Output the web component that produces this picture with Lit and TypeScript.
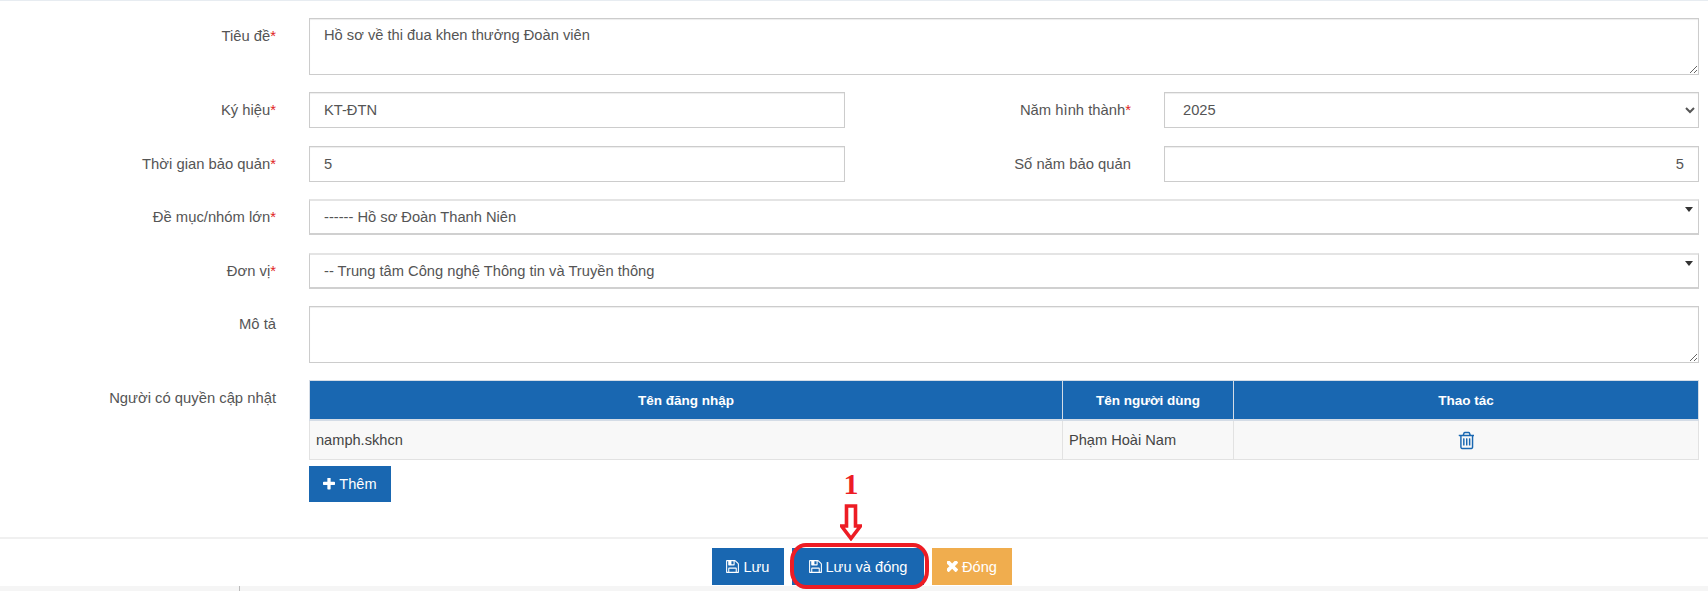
import { LitElement, html, css, svg } from "lit";
import { customElement } from "lit/decorators.js";

const floppy = svg`<path d="M384 1536h768v-384h-768v384zm896 0h128v-896q0-14-10-38.5t-20-34.5l-281-281q-10-10-34-20t-39-10v416q0 40-28 68t-68 28h-576q-40 0-68-28t-28-68v-416h-128v1280h128v-416q0-40 28-68t68-28h832q40 0 68 28t28 68v416zm-384-928v-320q0-13-9.5-22.5t-22.5-9.5h-192q-13 0-22.5 9.5t-9.5 22.5v320q0 13 9.5 22.5t22.5 9.5h192q13 0 22.5-9.5t9.5-22.5zm640 32v928q0 40-28 68t-68 28h-1344q-40 0-68-28t-28-68v-1344q0-40 28-68t68-28h928q40 0 88 20t76 48l280 280q28 28 48 76t20 88z"/>`;
const plus = svg`<path d="M1600 736v192q0 40-28 68t-68 28h-416v416q0 40-28 68t-68 28h-192q-40 0-68-28t-28-68v-416h-416q-40 0-68-28t-28-68v-192q0-40 28-68t68-28h416v-416q0-40 28-68t68-28h192q40 0 68 28t28 68v416h416q40 0 68 28t28 68z"/>`;
const times = svg`<path d="M1298 1322q0 40-28 68l-136 136q-28 28-68 28t-68-28l-294-294-294 294q-28 28-68 28t-68-28l-136-136q-28-28-28-68t28-68l294-294-294-294q-28-28-28-68t28-68l136-136q28-28 68-28t68 28l294 294 294-294q28-28 68-28t68 28l136 136q28 28 28 68t-28 68l-294 294 294 294q28 28 28 68z"/>`;
const trash = svg`<path d="M704 736v576q0 14-9 23t-23 9h-64q-14 0-23-9t-9-23v-576q0-14 9-23t23-9h64q14 0 23 9t9 23zm256 0v576q0 14-9 23t-23 9h-64q-14 0-23-9t-9-23v-576q0-14 9-23t23-9h64q14 0 23 9t9 23zm256 0v576q0 14-9 23t-23 9h-64q-14 0-23-9t-9-23v-576q0-14 9-23t23-9h64q14 0 23 9t9 23zm128 724v-948h-896v948q0 22 7 40.5t14.5 27 10.5 8.5h832q3 0 10.5-8.5t14.5-27 7-40.5zm-672-1076h448l-48-117q-7-9-17-11h-317q-10 2-17 11zm928 32v64q0 14-9 23t-23 9h-96v948q0 83-47 143.5t-113 60.5h-832q-66 0-113-58.5t-47-141.5v-952h-96q-14 0-23-9t-9-23v-64q0-14 9-23t23-9h309l70-167q15-37 54-63t79-26h320q40 0 79 26t54 63l70 167h309q14 0 23 9t9 23z"/>`;

@customElement("app-root")
export class AppRoot extends LitElement {
  static styles = css`
    :host {
      display: flex;
      flex-direction: column;
      height: 591px;
      overflow: hidden;
      background: #fff;
      font-family: "Liberation Sans", Arial, sans-serif;
      font-size: 14.6px;
      color: #555;
    }
    * { box-sizing: border-box; }
    .form {
      flex: 1;
      display: flex;
      flex-direction: column;
      gap: 17.4px;
      padding: 17px 9px 0 0;
      border-top: 1px solid #e7ecf1;
    }
    .row {
      display: grid;
      grid-template-columns: 276px 1fr;
      column-gap: 33px;
    }
    .row.two { grid-template-columns: 276px 536px 253px 1fr; }
    .label {
      text-align: right;
      line-height: 20px;
      padding-top: 8px;
      color: #555;
      font-size: 14.8px;
    }
    .req { color: #e02222; }
    .control, textarea, input, select {
      font: inherit;
      font-size: 14.7px;
      color: #555;
      border: 1px solid #ccc;
      border-radius: 0;
      background: #fff;
      width: 100%;
      outline: none;
      box-shadow: inset 0 1px 1px rgba(0, 0, 0, 0.075);
    }
    textarea {
      display: block;
      height: 57px;
      padding: 6px 14px;
      line-height: 20px;
      resize: vertical;
    }
    input, select {
      display: block;
      height: 36px;
      padding: 6px 14px;
    }
    input.num { text-align: right; }
    select { padding-left: 14px; }
    .combo {
      position: relative;
      height: 36px;
      line-height: 33px;
      padding: 0 24px 0 14px;
      border-top: 2px solid #e4e4e4;
      border-bottom: 2px solid #d0d0d0;
      box-shadow: none;
    }
    .caret {
      position: absolute;
      right: 5px;
      top: 6px;
      width: 0;
      height: 0;
      border-left: 4px solid transparent;
      border-right: 4px solid transparent;
      border-top: 5px solid #333;
    }
    table {
      width: 100%;
      border-collapse: collapse;
      table-layout: fixed;
    }
    th {
      height: 39px;
      background: #1967b1;
      color: #fff;
      font-weight: 700;
      font-size: 13.5px;
      text-align: center;
      border: 1px solid #d4dce6;
      border-bottom-width: 2px;
      padding: 0 8px;
    }
    td {
      height: 40px;
      background: #f8f8f8;
      border: 1px solid #e2e2e2;
      padding: 0 6px;
      color: #444;
    }
    td.act { text-align: center; }
    .c1 { width: 753px; }
    .c2 { width: 171px; }
    .trash { width: 16px; height: 19px; fill: #1967b1; display: inline-block; vertical-align: middle; }
    .users { display: flex; flex-direction: column; align-items: flex-start; gap: 6px; }
    .btn {
      display: inline-flex;
      align-items: center;
      gap: 4px;
      height: 36px;
      padding: 0 15px;
      border: 0;
      background: #1967b1;
      color: #fff;
      font: inherit;
    }
    .btn.add { width: 82px; padding: 0; justify-content: center; }
    .btn svg { fill: #fff; display: block; }
    .btn.warn { background: #f0ad4e; }
    .footer {
      height: 49px;
      border-top: 2px solid #f0f0f0;
      display: flex;
      justify-content: center;
      padding: 9px 0 0 16px;
      gap: 8px;
      background: #fff;
    }
    .footer .btn { width: 72px; justify-content: center; padding: 0; height: 37px; }
    .footer .btn.main { width: 132px; }
    .footer .btn.warn { width: 80px; }
    .mark { position: relative; display: flex; height: 37px; }
    .ring {
      position: absolute;
      left: -2px;
      right: -5px;
      top: -5px;
      bottom: -4px;
      border: 4px solid #ed1c24;
      border-radius: 16px / 18px;
      pointer-events: none;
    }
    .num1 {
      position: absolute;
      left: 47px;
      top: -79px;
      width: 24px;
      text-align: center;
      font: 700 30px/30px "Liberation Serif", serif;
      color: #ed1c24;
    }
    .arrow { position: absolute; left: 48px; top: -44px; width: 22px; height: 37px; }
    .strip {
      height: 5px;
      background: #f5f5f5;
      padding-left: 239px;
    }
    .tick { width: 1px; height: 5px; background: #bbb; }
  `;

  private label(text: string, req = true) {
    return html`<div class="label">${text}${req ? html`<span class="req">*</span>` : ""}</div>`;
  }

  render() {
    return html`
      <div class="form">
        <div class="row">
          ${this.label("Tiêu đề")}
          <textarea .value=${"Hồ sơ về thi đua khen thưởng Đoàn viên"}></textarea>
        </div>
        <div class="row two">
          ${this.label("Ký hiệu")}
          <input value="KT-ĐTN" />
          ${this.label("Năm hình thành")}
          <select><option>2025</option></select>
        </div>
        <div class="row two">
          ${this.label("Thời gian bảo quản")}
          <input value="5" />
          ${this.label("Số năm bảo quản", false)}
          <input class="num" value="5" />
        </div>
        <div class="row">
          ${this.label("Đề mục/nhóm lớn")}
          <div class="control combo">------ Hồ sơ Đoàn Thanh Niên<span class="caret"></span></div>
        </div>
        <div class="row">
          ${this.label("Đơn vị")}
          <div class="control combo">-- Trung tâm Công nghệ Thông tin và Truyền thông<span class="caret"></span></div>
        </div>
        <div class="row">
          ${this.label("Mô tả", false)}
          <textarea></textarea>
        </div>
        <div class="row">
          ${this.label("Người có quyền cập nhật", false)}
          <div class="users">
            <table>
              <thead>
                <tr>
                  <th class="c1">Tên đăng nhập</th>
                  <th class="c2">Tên người dùng</th>
                  <th>Thao tác</th>
                </tr>
              </thead>
              <tbody>
                <tr>
                  <td>namph.skhcn</td>
                  <td>Phạm Hoài Nam</td>
                  <td class="act"><svg class="trash" viewBox="128 128 1408 1536">${trash}</svg></td>
                </tr>
              </tbody>
            </table>
            <button class="btn add"><svg width="12" height="12" viewBox="192 192 1408 1408">${plus}</svg>Thêm</button>
          </div>
        </div>
      </div>
      <div class="footer">
        <button class="btn"><svg width="13" height="15" viewBox="0 0 1536 1792">${floppy}</svg>Lưu</button>
        <div class="mark">
          <button class="btn main"><svg width="13" height="15" viewBox="0 0 1536 1792">${floppy}</svg>Lưu và đóng</button>
          <span class="num1">1</span>
          <svg class="arrow" viewBox="0 0 22 37">
            <path d="M6.5 2h9v20h5L11 34.5 1.5 22h5z" fill="#fff" stroke="#ed1c24" stroke-width="3.6" stroke-linejoin="miter"/>
          </svg>
          <span class="ring"></span>
        </div>
        <button class="btn warn"><svg width="11" height="11" viewBox="182 442 1116 1112">${times}</svg>Đóng</button>
      </div>
      <div class="strip"><div class="tick"></div></div>
    `;
  }
}
